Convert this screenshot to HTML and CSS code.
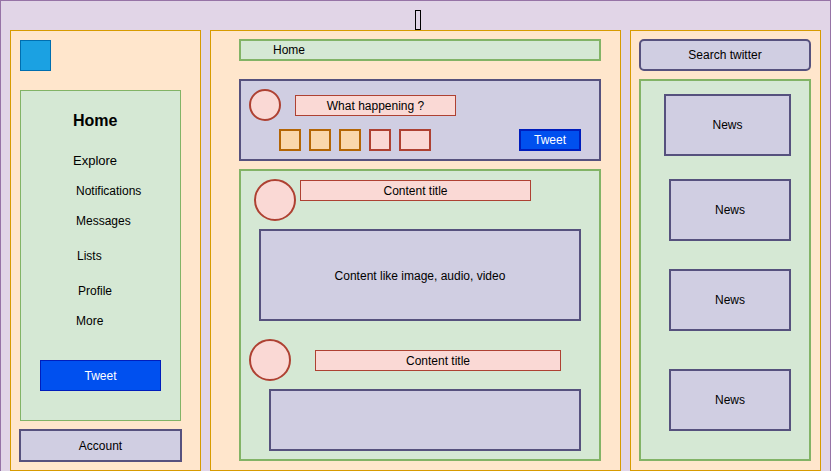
FILE: index.html
```html
<!DOCTYPE html>
<html lang="en">
  <head>
    <meta charset="UTF-8" />
    <meta name="viewport" content="width=device-width, initial-scale=1.0" />
    <title>Twitter wireframe</title>
    <link rel="stylesheet" href="styles.css">
  </head>
  <body>
    <div class="frame">
      <div class="topbar"><span class="marker"></span></div>
      <div class="columns">
        <!-- left: logo, navigation, account -->
        <aside class="column sidebar">
          <div class="logo"></div>
          <nav class="nav">
            <div class="nav-home">Home</div>
            <div class="nav-item nav-explore">Explore</div>
            <div class="nav-item nav-notifications">Notifications</div>
            <div class="nav-item nav-messages">Messages</div>
            <div class="nav-item nav-lists">Lists</div>
            <div class="nav-item nav-profile">Profile</div>
            <div class="nav-item nav-more">More</div>
            <div class="side-tweet">Tweet</div>
          </nav>
          <div class="account">Account</div>
        </aside>

        <!-- center: header, composer, feed -->
        <main class="column timeline">
          <div class="home-bar">Home</div>
          <div class="composer">
            <div class="composer-top">
              <div class="avatar avatar-sm"></div>
              <div class="prompt">What happening ?</div>
            </div>
            <div class="composer-tools">
              <div class="tool"></div>
              <div class="tool"></div>
              <div class="tool"></div>
              <div class="tool tool-red"></div>
              <div class="tool tool-red tool-wide"></div>
              <div class="composer-tweet">Tweet</div>
            </div>
          </div>
          <div class="feed">
            <div class="post-head post-head-first">
              <div class="avatar avatar-lg"></div>
              <div class="post-title post-title-first">Content title</div>
            </div>
            <div class="media media-first">Content like image, audio, video</div>
            <div class="post-head post-head-second">
              <div class="avatar avatar-lg"></div>
              <div class="post-title post-title-second">Content title</div>
            </div>
            <div class="media media-second"></div>
          </div>
        </main>

        <!-- right: search and news -->
        <aside class="column trends">
          <div class="search">Search twitter</div>
          <div class="news-list">
            <div class="news news-first">News</div>
            <div class="news news-second">News</div>
            <div class="news news-third">News</div>
            <div class="news news-fourth">News</div>
          </div>
        </aside>
      </div>
    </div>
  </body>
</html>
```

FILE: styles.css
```css
* {
  box-sizing: border-box;
}
body {
  margin: 0;
  font-family: "Liberation Sans", Arial, sans-serif;
  font-size: 12px;
  color: #000;
  overflow: hidden;
}
.frame {
  width: 831px;
  height: 490px;
  border: 1px solid #9673a6;
  background-color: #e1d5e7;
  padding: 0 9px;
}
.topbar {
  height: 29px;
  display: flex;
  align-items: flex-end;
}
.marker {
  width: 6px;
  height: 20px;
  border: 1px solid #000;
  margin-left: 405px;
}
.columns {
  display: flex;
  gap: 9px;
}
.column {
  height: 441px;
  border: 1px solid #d79b00;
  background-color: #ffe6cc;
}

/* left column */
.sidebar {
  width: 191px;
}
.logo {
  width: 31px;
  height: 31px;
  margin: 9px 0 0 9px;
  background-color: #1ba1e2;
  border: 1px solid #006eaf;
}
.nav {
  width: 161px;
  height: 331px;
  margin: 19px 0 0 9px;
  background-color: #d5e8d4;
  border: 1px solid #82b366;
}
.nav-home {
  margin-top: 20px;
  padding-left: 52px;
  font-size: 16px;
  font-weight: bold;
  line-height: 20px;
}
.nav-item {
  line-height: 20px;
  margin-top: 10px;
  padding-left: 55px;
}
.nav-explore {
  margin-top: 20px;
  padding-left: 52px;
  font-size: 13px;
}
.nav-lists {
  margin-top: 15px;
  padding-left: 56px;
}
.nav-profile {
  margin-top: 15px;
  padding-left: 57px;
}
.side-tweet {
  width: 121px;
  height: 31px;
  margin: 29px auto 0;
  padding-top: 1px;
  background-color: #0050ef;
  border: 1px solid #001dbc;
  color: #fff;
  text-align: center;
  line-height: 28px;
}
.account {
  width: 163px;
  height: 33px;
  margin: 8px 0 0 8px;
  padding-top: 1px;
  background-color: #d0cee2;
  border: 2px solid #56517e;
  text-align: center;
  line-height: 28px;
}

/* center column */
.timeline {
  width: 411px;
}
.home-bar {
  width: 362px;
  height: 22px;
  margin: 8px 0 0 28px;
  padding: 1px 0 0 32px;
  background-color: #d5e8d4;
  border: 2px solid #82b366;
  line-height: 17px;
}
.composer {
  width: 362px;
  height: 82px;
  margin: 18px 0 0 28px;
  padding: 8px 18px 0 8px;
  background-color: #d0cee2;
  border: 2px solid #56517e;
}
.composer-top {
  display: flex;
  align-items: flex-start;
}
.avatar {
  border-radius: 50%;
  border: 2px solid #ae4132;
  background-color: #fad9d5;
  flex-shrink: 0;
}
.avatar-sm {
  width: 32px;
  height: 32px;
}
.avatar-lg {
  width: 42px;
  height: 42px;
}
.prompt {
  width: 161px;
  height: 21px;
  margin: 6px 0 0 14px;
  padding-top: 1px;
  background-color: #fad9d5;
  border: 1px solid #ae4132;
  text-align: center;
  line-height: 18px;
}
.composer-tools {
  display: flex;
  gap: 8px;
  margin: 8px 0 0 30px;
}
.tool {
  width: 22px;
  height: 22px;
  background-color: #fad7ac;
  border: 2px solid #b46504;
}
.tool-red {
  background-color: #fad9d5;
  border-color: #ae4132;
}
.tool-wide {
  width: 32px;
}
.composer-tweet {
  width: 62px;
  height: 22px;
  margin-left: auto;
  padding-top: 1px;
  background-color: #0050ef;
  border: 2px solid #001dbc;
  color: #fff;
  text-align: center;
  line-height: 17px;
}
.feed {
  width: 362px;
  height: 292px;
  margin: 8px 0 0 28px;
  background-color: #d5e8d4;
  border: 2px solid #82b366;
}
.post-head {
  display: flex;
  align-items: flex-start;
}
.post-head-first {
  margin: 8px 0 0 13px;
}
.post-head-second {
  margin: 18px 0 0 8px;
}
.post-title {
  height: 21px;
  padding-top: 1px;
  background-color: #fad9d5;
  border: 1px solid #ae4132;
  text-align: center;
  line-height: 18px;
}
.post-title-first {
  width: 231px;
  margin: 1px 0 0 4px;
}
.post-title-second {
  width: 246px;
  margin: 11px 0 0 24px;
}
.media {
  display: flex;
  align-items: center;
  justify-content: center;
  padding-top: 2px;
  background-color: #d0cee2;
  border: 2px solid #56517e;
}
.media-first {
  width: 322px;
  height: 92px;
  margin: 8px 0 0 18px;
}
.media-second {
  width: 312px;
  height: 62px;
  margin: 8px 0 0 28px;
}

/* right column */
.trends {
  width: 191px;
}
.search {
  width: 172px;
  height: 32px;
  margin: 8px 0 0 8px;
  padding-top: 1px;
  background-color: #d0cee2;
  border: 2px solid #56517e;
  border-radius: 5px;
  text-align: center;
  line-height: 27px;
}
.news-list {
  width: 172px;
  height: 382px;
  margin: 8px 0 0 8px;
  background-color: #d5e8d4;
  border: 2px solid #82b366;
  overflow: hidden;
}
.news {
  width: 122px;
  height: 62px;
  margin-left: 28px;
  padding-top: 1px;
  background-color: #d0cee2;
  border: 2px solid #56517e;
  text-align: center;
  line-height: 57px;
}
.news-first {
  width: 127px;
  margin: 13px 0 0 23px;
}
.news-second {
  margin-top: 23px;
}
.news-third {
  margin-top: 28px;
}
.news-fourth {
  margin-top: 38px;
}
```
